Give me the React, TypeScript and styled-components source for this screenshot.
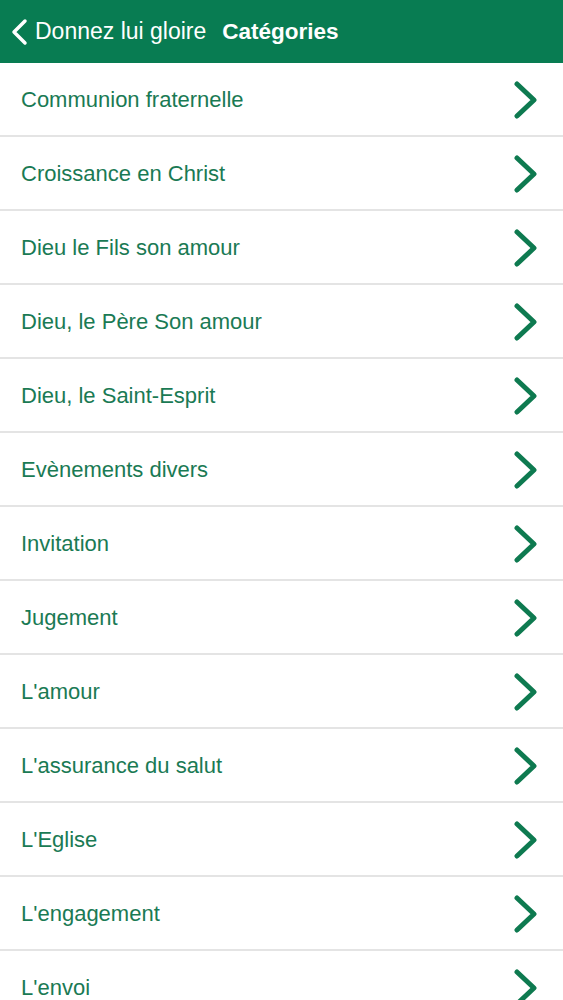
import React from 'react';
import styled, { createGlobalStyle } from 'styled-components';

const GlobalStyle = createGlobalStyle`
  body {
    margin: 0;
    background: #ffffff;
    font-family: "Liberation Sans", Arial, sans-serif;
  }
`;

const Screen = styled.div`
  display: flex;
  flex-direction: column;
  width: 563px;
  height: 1000px;
  overflow: hidden;
  background: #ffffff;
`;

const NavBar = styled.header`
  height: 63px;
  flex-shrink: 0;
  display: flex;
  align-items: center;
  background-color: #087c52;
  color: #ffffff;
  padding: 0 10px;
  box-sizing: border-box;
`;

const BackButton = styled.div`
  display: flex;
  align-items: center;
  gap: 7px;
  font-size: 23px;
  margin-right: 16px;
`;

const Title = styled.h1`
  margin: 0;
  font-size: 22.5px;
  font-weight: 700;
`;

const List = styled.ul`
  list-style: none;
  margin: 0;
  padding: 0;
`;

const Row = styled.li`
  height: 74px;
  box-sizing: border-box;
  display: flex;
  align-items: center;
  justify-content: space-between;
  padding: 2px 24px 0 21px;
  border-bottom: 2px solid #e4e4e4;
  color: #1a7a54;
  font-size: 22px;
`;

const categories = [
  'Communion fraternelle',
  'Croissance en Christ',
  'Dieu le Fils son amour',
  'Dieu, le Père Son amour',
  'Dieu, le Saint-Esprit',
  'Evènements divers',
  'Invitation',
  'Jugement',
  "L'amour",
  "L'assurance du salut",
  "L'Eglise",
  "L'engagement",
  "L'envoi",
];

const BackChevron = () => (
  <svg width="18" height="28" viewBox="0 0 18 28">
    <path d="M15 3 L4 14 L15 25" fill="none" stroke="#ffffff" strokeWidth="3.5" strokeLinecap="round" strokeLinejoin="round" />
  </svg>
);

const Chevron = () => (
  <svg width="26" height="38" viewBox="0 0 26 38">
    <path d="M4 3 L21 19 L4 35" fill="none" stroke="#0e7a50" strokeWidth="5" strokeLinecap="round" strokeLinejoin="round" />
  </svg>
);

const App: React.FC = () => {
  return (
    <Screen>
      <GlobalStyle />
      <NavBar>
        <BackButton>
          <BackChevron />
          <span>Donnez lui gloire</span>
        </BackButton>
        <Title>Catégories</Title>
      </NavBar>
      <List>
        {categories.map((c) => (
          <Row key={c}>
            <span>{c}</span>
            <Chevron />
          </Row>
        ))}
      </List>
    </Screen>
  );
};

export default App;
